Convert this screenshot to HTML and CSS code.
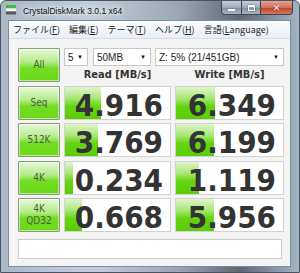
FILE: index.html
```html
<!DOCTYPE html>
<html lang="ja">
<head>
  <meta charset="UTF-8" />
  <title>CrystalDiskMark 3.0.1 x64</title>
  <link rel="stylesheet" href="styles.css">
</head>
<body>

  <div class="window">
    <div class="titlebar">
      <svg class="app-icon" width="10" height="10" viewBox="0 0 10 10">
        <rect x="0" y="0" width="10" height="3" fill="#3fbf3f"/>
        <rect x="0" y="3.5" width="10" height="2.5" fill="#f2f2f2"/>
        <rect x="0" y="6.5" width="10" height="3" fill="#5a5a5a"/>
      </svg>
      <span class="title">CrystalDiskMark 3.0.1 x64</span>
      <div class="caption">
        <span class="cap min"><i></i></span>
        <span class="cap max"><i></i></span>
        <span class="cap close">✕</span>
      </div>
    </div>

    <div class="client">
      <div class="menubar">
        <span>ファイル(<u>F</u>)</span>
        <span>編集(<u>E</u>)</span>
        <span>テーマ(<u>T</u>)</span>
        <span>ヘルプ(<u>H</u>)</span>
        <span>言語(<u>L</u>anguage)</span>
      </div>

      <div class="panel">
        <div class="grid">
          <button class="test">All</button>
          <div class="top">
            <div class="selects">
              <div class="select count"><span>5</span><i>▼</i></div>
              <div class="select size"><span>50MB</span><i>▼</i></div>
              <div class="select drive"><span>Z: 5% (21/451GB)</span><i>▼</i></div>
            </div>
            <div class="heads">
              <div>Read [MB/s]</div>
              <div>Write [MB/s]</div>
            </div>
          </div>

          <button class="test">Seq</button>
          <div class="cell"><div class="bar" style="width: 36px"></div><span>4.916</span></div>
          <div class="cell"><div class="bar" style="width: 39px"></div><span>6.349</span></div>

          <button class="test">512K</button>
          <div class="cell"><div class="bar" style="width: 33px"></div><span>3.769</span></div>
          <div class="cell"><div class="bar" style="width: 38px"></div><span>6.199</span></div>

          <button class="test">4K</button>
          <div class="cell"><div class="bar" style="width: 8px"></div><span>0.234</span></div>
          <div class="cell"><div class="bar" style="width: 23px"></div><span>1.119</span></div>

          <button class="test two">4K<br>QD32</button>
          <div class="cell"><div class="bar" style="width: 17px"></div><span>0.668</span></div>
          <div class="cell"><div class="bar" style="width: 38px"></div><span>5.956</span></div>
        </div>

        <div class="comment"></div>
      </div>
    </div>
  </div>

</body>
</html>
```

FILE: styles.css
```css
* {
  box-sizing: border-box;
}

body {
  margin: 0;
  width: 300px;
  height: 273px;
  overflow: hidden;
  background: #ffffff;
}

.window {
  width: 300px;
  height: 273px;
  display: flex;
  flex-direction: column;
  padding: 0 8px 5px 7px;
  background: linear-gradient(90deg, #aab8c6 0%, #c2ceda 30%, #9aa6b2 60%, #5d6873 80%, #a4b3c2 100%);
  border: 1px solid #4a5561;
  border-radius: 6px 6px 0 0;
}

.titlebar {
  height: 19px;
  display: flex;
  align-items: center;
  margin: 0 -8px 0 -7px;
  padding-left: 5px;
}

.app-icon {
  flex: none;
  margin-top: -1px;
}

.title {
  margin-left: 7px;
  font-family: "Liberation Sans", sans-serif;
  font-size: 8.5px;
  color: #111;
  text-shadow: 0 0 4px #fff, 0 0 6px #fff;
}

.caption {
  margin-left: auto;
  margin-right: 6px;
  align-self: flex-start;
  display: flex;
}

.cap {
  height: 14px;
  border: 1px solid #3c4652;
  border-top: none;
  background: linear-gradient(#c5ced8, #9aa8b6 50%, #7f8d9b 51%, #a8b6c4);
  display: flex;
  align-items: center;
  justify-content: center;
}

.cap.min {
  width: 20px;
  border-radius: 0 0 0 4px;
  border-right: none;
}

.cap.min i {
  width: 7px;
  height: 2px;
  margin-top: 4px;
  background: #fff;
  box-shadow: 0 0 1px #333;
}

.cap.max {
  width: 19px;
  border-right: none;
}

.cap.max i {
  width: 7px;
  height: 6px;
  border: 1px solid #fff;
  border-top-width: 2px;
  box-shadow: 0 0 1px #333;
}

.cap.close {
  width: 33px;
  border-radius: 0 0 4px 0;
  background: linear-gradient(#e8a493, #d0705a 50%, #c0412a 51%, #d7745c);
  color: #fff;
  font-family: "DejaVu Sans", sans-serif;
  font-size: 9px;
  font-weight: bold;
  text-shadow: 0 0 2px #622;
}

.client {
  flex: 1;
  display: flex;
  flex-direction: column;
  background: #f4f4f4;
  border: 1px solid #7d8c9c;
}

.menubar {
  height: 18px;
  display: flex;
  align-items: center;
  gap: 9px;
  padding-left: 4px;
  background: linear-gradient(#fbfcfe, #eaeff6);
  border-bottom: 1px solid #d6dde6;
  font-family: "Noto Sans CJK JP", "Liberation Sans", sans-serif;
  font-size: 9px;
  color: #222;
}

.menubar u {
  text-decoration-thickness: 1px;
}

.panel {
  flex: 1;
  padding: 9px 8px 0 9px;
}

.grid {
  display: grid;
  grid-template-columns: 42px 107px 109px;
  grid-template-rows: repeat(5, 34px);
  column-gap: 4px;
  row-gap: 3.5px;
}

.test {
  margin: 0;
  padding: 0;
  border: 1px solid #8a9a80;
  border-radius: 1px;
  background: linear-gradient(#e6f8d8 0%, #b6ec8c 40%, #72dc22 60%, #6ad818 100%);
  box-shadow: inset 0 0 0 1px rgba(255, 255, 255, 0.5);
  font-family: "DejaVu Sans Condensed", "DejaVu Sans", sans-serif;
  font-size: 10px;
  line-height: 12px;
  color: #4a6040;
}

.top {
  grid-column: 2 / 4;
  display: flex;
  flex-direction: column;
}

.selects {
  display: flex;
  height: 18px;
}

.select {
  display: flex;
  align-items: center;
  justify-content: space-between;
  padding: 0 4px 0 3px;
  background: #fff;
  border: 1px solid #c8c8c8;
  font-family: "Liberation Sans", sans-serif;
  font-size: 10px;
  color: #222;
}

.select i {
  font-style: normal;
  font-size: 6px;
  color: #111;
}

.select.count {
  width: 24px;
}

.select.size {
  width: 58px;
  margin-left: 5px;
}

.select.drive {
  width: 129px;
  margin-left: 4px;
}

.heads {
  flex: 1;
  display: grid;
  grid-template-columns: 107px 109px;
  column-gap: 4px;
  align-items: center;
  font-family: "DejaVu Sans Condensed", "DejaVu Sans", sans-serif;
  font-size: 11px;
  font-weight: bold;
  color: #333;
  text-align: center;
}

.cell {
  position: relative;
  background: #fff;
  border: 1px solid #d2d2d2;
  text-align: right;
  padding-right: 7px;
  font-family: "DejaVu Sans Condensed", "DejaVu Sans", sans-serif;
  font-size: 31px;
  font-weight: bold;
  line-height: 34px;
  color: #333;
}

.cell span {
  position: relative;
  top: 1px;
}

.bar {
  position: absolute;
  left: 0;
  top: 0;
  bottom: 0;
  background: linear-gradient(#dff5cc 0%, #a8e878 35%, #66d410 60%, #5ccc08 100%);
}

.comment {
  margin-top: 7px;
  height: 20px;
  background: #fff;
  border: 1px solid #cfcfcf;
}
```
